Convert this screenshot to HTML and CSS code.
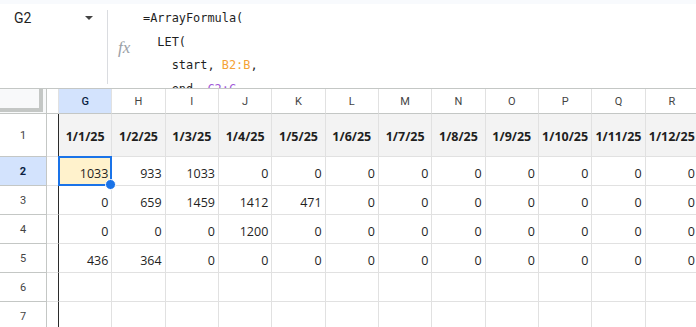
FILE: index.html
```html
<!DOCTYPE html>
<html lang="en">
<head>
	<meta charset="UTF-8">
	<title>Sheet</title>
<link rel="stylesheet" href="styles.css">
</head>
<body>
<div class="top_strip"></div>
<div class="formula_bar">
	<div class="name_box"><span class="cell_ref">G2</span><span class="caret"></span></div>
	<div class="divider"></div>
	<div class="fx">fx</div>
<pre class="formula">=ArrayFormula(
  LET(
    start, <span class="ref_a">B2:B</span>,
    end, <span class="ref_b">C2:C</span>,</pre>
</div>

<div class="sheet">
	<!-- header -->
	<div class="corner"><div class="freeze"></div></div><div class="col_head gap"></div>
	<div class="col_head sel">G</div><div class="col_head">H</div><div class="col_head">I</div><div class="col_head">J</div><div class="col_head">K</div><div class="col_head">L</div>
	<div class="col_head">M</div><div class="col_head">N</div><div class="col_head">O</div><div class="col_head">P</div><div class="col_head">Q</div><div class="col_head">R</div>
	<!-- row 1 -->
	<div class="row_head">1</div><div class="gap_cell"></div>
	<div class="date">1/1/25</div><div class="date">1/2/25</div><div class="date">1/3/25</div><div class="date">1/4/25</div><div class="date">1/5/25</div><div class="date">1/6/25</div>
	<div class="date">1/7/25</div><div class="date">1/8/25</div><div class="date">1/9/25</div><div class="date">1/10/25</div><div class="date">1/11/25</div><div class="date">1/12/25</div>
	<!-- row 2 -->
	<div class="row_head sel">2</div><div class="gap_cell"></div>
	<div class="num active">1033</div><div class="num">933</div><div class="num">1033</div><div class="num">0</div><div class="num">0</div><div class="num">0</div>
	<div class="num">0</div><div class="num">0</div><div class="num">0</div><div class="num">0</div><div class="num">0</div><div class="num">0</div>
	<!-- row 3 -->
	<div class="row_head">3</div><div class="gap_cell"></div>
	<div class="num">0</div><div class="num">659</div><div class="num">1459</div><div class="num">1412</div><div class="num">471</div><div class="num">0</div>
	<div class="num">0</div><div class="num">0</div><div class="num">0</div><div class="num">0</div><div class="num">0</div><div class="num">0</div>
	<!-- row 4 -->
	<div class="row_head">4</div><div class="gap_cell"></div>
	<div class="num">0</div><div class="num">0</div><div class="num">0</div><div class="num">1200</div><div class="num">0</div><div class="num">0</div>
	<div class="num">0</div><div class="num">0</div><div class="num">0</div><div class="num">0</div><div class="num">0</div><div class="num">0</div>
	<!-- row 5 -->
	<div class="row_head">5</div><div class="gap_cell"></div>
	<div class="num">436</div><div class="num">364</div><div class="num">0</div><div class="num">0</div><div class="num">0</div><div class="num">0</div>
	<div class="num">0</div><div class="num">0</div><div class="num">0</div><div class="num">0</div><div class="num">0</div><div class="num">0</div>
	<!-- row 6 -->
	<div class="row_head">6</div><div class="gap_cell"></div>
	<div class="num"></div><div class="num"></div><div class="num"></div><div class="num"></div><div class="num"></div><div class="num"></div>
	<div class="num"></div><div class="num"></div><div class="num"></div><div class="num"></div><div class="num"></div><div class="num"></div>
	<!-- row 7 -->
	<div class="row_head">7</div><div class="gap_cell"></div>
	<div class="num"></div><div class="num"></div><div class="num"></div><div class="num"></div><div class="num"></div><div class="num"></div>
	<div class="num"></div><div class="num"></div><div class="num"></div><div class="num"></div><div class="num"></div><div class="num"></div>
</div>
</body>
</html>
```

FILE: styles.css
```css
* {box-sizing: border-box;}

body {margin: 0; overflow: hidden; width: 696px; height: 327px; background: #fff;
	font-family: "Open Sans", "Noto Sans", sans-serif; color: #1f1f1f;}

.top_strip {height: 4px; background: #f8fafd;}

.formula_bar {display: flex; height: 85px; border-bottom: 1px solid #c4c7c5; overflow: hidden;}

.name_box {width: 107px; flex: none; display: flex; align-items: center; justify-content: space-between;
	height: 28px; padding: 0 14px 0 14px; font-family: Roboto, sans-serif; font-size: 14px;}
.caret {width: 0; height: 0; border-left: 4px solid transparent; border-right: 4px solid transparent;
	border-top: 4px solid #444;}

.divider {width: 1px; flex: none; background: #dadce0; margin-top: 6px; height: 74px;}

.fx {width: 35px; flex: none; padding-left: 10px; align-self: center; margin-top: 4px;
	font-family: "Liberation Serif", serif; font-style: italic; font-size: 17px; color: #9aa0a6;}

.formula {margin: 0; padding-top: 3px; font-family: "DejaVu Sans Mono", monospace; font-size: 11.9px;
	line-height: 23.5px; color: #1f1f1f; white-space: pre;}
.ref_a {color: #f4a236;}
.ref_b {color: #a259d9;}

.sheet {display: grid; grid-template-columns: 47px 12px repeat(12, 53.333px);
	grid-template-rows: 25px 43px repeat(6, 29px); width: 760px;}

.sheet > div {border-right: 1px solid #e1e1e1; border-bottom: 1px solid #e1e1e1;}

.corner {background: #f8f9fa; padding: 1px 0 0 0;}
.corner .freeze {height: 100%; border-right: 4px solid #c4c7c5; border-bottom: 4px solid #c4c7c5;
	margin-right: 3px; margin-top: -1px;}
.sheet > .corner {border-right: 1px solid #c4c7c5; border-bottom: 1px solid #c4c7c5;}

.col_head {display: flex; align-items: center; justify-content: center; font-family: Roboto, sans-serif;
	font-size: 11px; color: #444; padding-top: 1px;}
.sheet > .col_head {border-bottom-color: #c4c7c5;}
.col_head.sel {background: #d3e3fd; color: #0b1f44; font-weight: 500;}

.row_head {display: flex; align-items: center; justify-content: center; font-family: Roboto, sans-serif;
	font-size: 11px; color: #444;}
.sheet > .row_head {border-bottom-color: #c4c7c5; border-right-color: #c4c7c5;}
.row_head.sel {background: #d3e3fd; color: #0b1f44; font-weight: 700;}

.sheet > .gap_cell {border-right: 1px solid #2b2b2b;}

.date {background: #f3f3f3; display: flex; align-items: center; justify-content: center;
	font-weight: 700; font-size: 12.5px; padding-top: 3px;}

.num {display: flex; align-items: flex-end; justify-content: flex-end; padding: 0 3px 3px 0;
	font-size: 12.5px;}

.num.active {position: relative; background: #fff2cc;}
.num.active::after {content: ""; position: absolute; left: -1px; top: -1px; right: -1px; bottom: -1px;
	border: 2px solid #1a73e8;}
.num.active::before {content: ""; position: absolute; right: -5px; bottom: -5px; width: 9px; height: 9px;
	border-radius: 50%; background: #1a73e8; border: 1px solid #fff; z-index: 2;}
```
